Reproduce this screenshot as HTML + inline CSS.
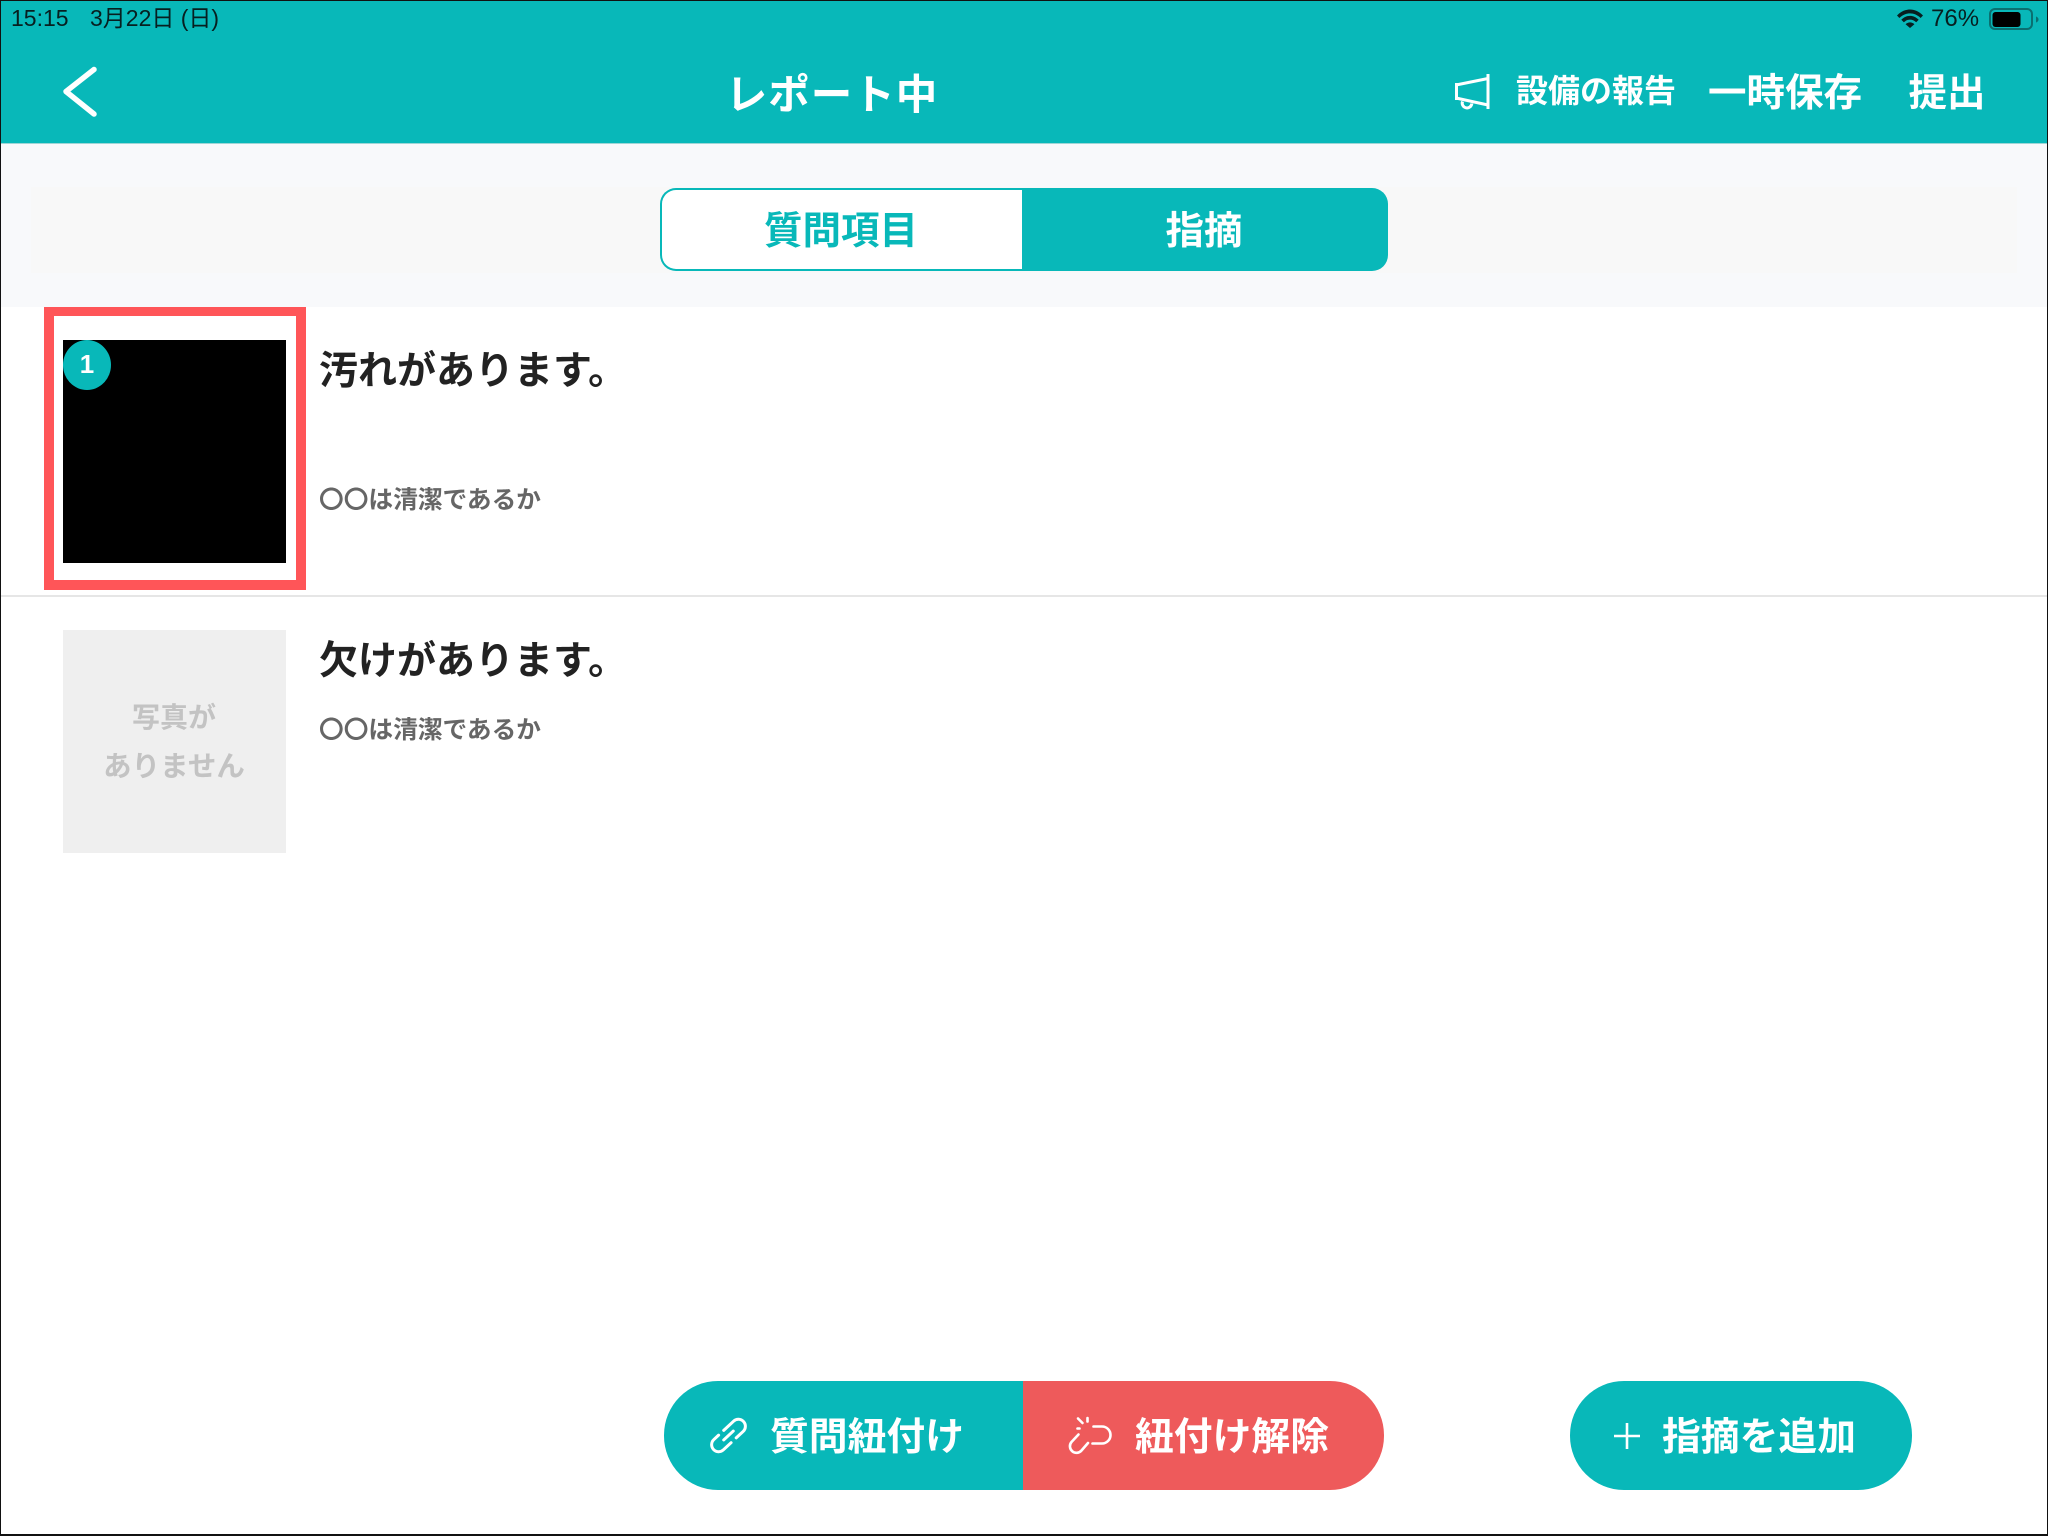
<!DOCTYPE html>
<html lang="ja">
<head>
<meta charset="utf-8">
<title>レポート中</title>
<style>
html,body{margin:0;padding:0;background:#fff}
body{width:2048px;height:1536px;position:relative;overflow:hidden;font-family:"Liberation Sans","Noto Sans CJK JP",sans-serif}
.a{position:absolute}
.t{position:absolute;white-space:nowrap;font-family:"Noto Sans CJK JP",sans-serif;font-weight:700;text-align:center}
</style>
</head>
<body>
<div class="a" style="left:0;top:0;width:2048px;height:144px;background:#08b8b9;border-bottom:1px solid #9fd6d6;box-sizing:border-box"></div>
<div class="a" style="left:0;top:144px;width:2048px;height:163px;background:#f8f9fb"></div>
<div class="a" style="left:31px;top:187px;width:1986px;height:86px;background:#f8f8f8"></div>

<div class="a" style="left:11px;top:5px;font:23px/26px 'Liberation Sans',sans-serif;color:#071f20;white-space:nowrap">15:15</div>
<div class="a" style="left:90px;top:5px;font:23px/26px 'Liberation Sans','Noto Sans CJK JP',sans-serif;color:#071f20;white-space:nowrap">3月22日 (日)</div>
<div class="a" style="left:1931px;top:6px;font:24px/26px 'Liberation Sans',sans-serif;color:#071f20;white-space:nowrap">76%</div>

<div class="t" style="left:632px;width:400px;top:61px;line-height:60px;font-size:41.5px;color:#fff;letter-spacing:1px">レポート中</div>
<div class="t" style="left:1516px;width:160px;top:65px;line-height:48px;font-size:32px;color:#fff">設備の報告</div>
<div class="t" style="left:1705px;width:160px;top:65px;line-height:50px;font-size:38.5px;color:#fff">一時保存</div>
<div class="t" style="left:1897px;width:100px;top:65px;line-height:50px;font-size:38.5px;color:#fff">提出</div>

<!-- segment -->
<div class="a" style="left:660px;top:188px;width:728px;height:83px;border-radius:16px;background:#08b8b9"></div>
<div class="a" style="left:662px;top:190px;width:360px;height:79px;border-radius:14px 0 0 14px;background:#fff"></div>
<div class="t" style="left:660px;width:362px;top:198px;line-height:60px;font-size:38.5px;color:#08b8b9">質問項目</div>
<div class="t" style="left:1021px;width:366px;top:198px;line-height:60px;font-size:38.5px;color:#fff">指摘</div>

<!-- row 1 -->
<div class="a" style="left:44px;top:307px;width:262px;height:283px;background:#ff5558"></div>
<div class="a" style="left:54px;top:316px;width:242px;height:264px;background:#fff"></div>
<div class="a" style="left:63px;top:340px;width:223px;height:223px;background:#000"></div>
<div class="a" style="left:63px;top:340px;width:48px;height:50px;border-radius:50%;background:#08b8b9"></div>
<div class="t" style="left:63px;width:48px;top:339px;line-height:50px;font-size:26px;color:#fff;font-family:'Liberation Sans',sans-serif;font-weight:700">1</div>
<div class="t" style="left:319px;top:343px;line-height:50px;font-size:39px;color:#222;text-align:left">汚れがあります。</div>
<div class="t" style="left:319px;top:480px;line-height:36px;font-size:24.7px;color:#666;text-align:left">〇〇は清潔であるか</div>
<div class="a" style="left:0;top:595px;width:2048px;height:2px;background:#e6e6e6"></div>

<!-- row 2 -->
<div class="a" style="left:63px;top:630px;width:223px;height:223px;background:#efefef"></div>
<div class="t" style="left:62px;width:224px;top:696px;line-height:40px;font-size:28px;color:#c3c3c3">写真が</div>
<div class="t" style="left:62px;width:224px;top:745px;line-height:40px;font-size:28.5px;color:#c3c3c3">ありません</div>
<div class="t" style="left:319px;top:633px;line-height:50px;font-size:39px;color:#222;text-align:left">欠けがあります。</div>
<div class="t" style="left:319px;top:710px;line-height:36px;font-size:24.7px;color:#666;text-align:left">〇〇は清潔であるか</div>

<!-- bottom buttons -->
<div class="a" style="left:664px;top:1381px;width:359px;height:109px;background:#08b8b9;border-radius:54px 0 0 54px"></div>
<div class="a" style="left:1023px;top:1381px;width:361px;height:109px;background:#ee5a5b;border-radius:0 54px 54px 0"></div>
<div class="a" style="left:1570px;top:1381px;width:342px;height:109px;background:#08b8b9;border-radius:54px"></div>
<div class="t" style="left:767px;width:200px;top:1404px;line-height:60px;font-size:38.8px;color:#fff">質問紐付け</div>
<div class="t" style="left:1132px;width:200px;top:1404px;line-height:60px;font-size:38.8px;color:#fff">紐付け解除</div>
<div class="t" style="left:1659px;width:200px;top:1404px;line-height:60px;font-size:38.8px;color:#fff">指摘を追加</div>

<!-- icons -->
<svg class="a" style="left:0;top:0" width="2048" height="1536" viewBox="0 0 2048 1536" fill="none">
  <!-- back -->
  <path d="M94 69.5L66 91.5L94 114" stroke="#fff" stroke-width="5.5" stroke-linecap="round" stroke-linejoin="round"/>
  <!-- megaphone -->
  <g stroke="#fff" stroke-width="3">
    <path d="M1456.5 83V100"/>
    <path d="M1488 74V109"/>
    <path d="M1456 85L1488 78.5"/>
    <path d="M1456 98L1488 105"/>
    <path d="M1462.5 101.5a4.8 4.8 0 1 0 9.3 2"/>
  </g>
  <!-- wifi -->
  <g fill="#071f20">
    <path d="M1897 15.5C1904.5 7.5 1915.5 7.5 1923 15.5L1920.6 18C1914.5 11.8 1905.5 11.8 1899.4 18Z"/>
    <path d="M1901.3 19.8C1906.5 14.6 1913.5 14.6 1918.7 19.8L1916.2 22.3C1912.4 18.8 1907.6 18.8 1903.8 22.3Z"/>
    <path d="M1905.6 24.2C1908.2 21.7 1911.8 21.7 1914.4 24.2L1910 28Z"/>
  </g>
  <!-- battery -->
  <rect x="1990" y="9" width="42" height="20" rx="5" stroke="#0a6f70" stroke-width="2"/>
  <rect x="1992.5" y="12" width="28" height="15" rx="3" fill="#000"/>
  <path d="M2036 16.5c2 .8 2.5 1.8 2.5 3s-.5 2.2-2.5 3z" fill="#0a6f70"/>
  <!-- link -->
  <g transform="translate(728.5 1435.5) rotate(-43)" stroke="#fff" stroke-width="3" stroke-linecap="round">
    <path d="M0 -7H13.5a7 7 0 0 1 0 14H4"/>
    <path d="M-3 7H-13.5a7 7 0 0 1 0 -14H-7"/>
    <path d="M-6.5 0H6.5"/>
  </g>
  <!-- unlink -->
  <g stroke="#fff" stroke-width="2.6" stroke-linecap="round" fill="none">
    <path d="M1093.5 1426.5H1102a8.5 8.5 0 0 1 0 17H1092.5"/>
    <path d="M1078.5 1434.5L1071.5 1442a6.5 6.5 0 0 0 10 8.5L1088 1443"/>
    <path d="M1078 1418.5L1082.5 1423"/>
    <path d="M1087.5 1418V1421.5"/>
    <path d="M1077.5 1428.5H1079.5"/>
  </g>
  <!-- plus -->
  <path d="M1614 1436H1640M1627 1423V1449" stroke="#fff" stroke-width="2.6"/>
</svg>

<!-- frame -->
<div class="a" style="left:0;top:0;width:2048px;height:1536px;border:1px solid #111;border-bottom-width:2px;box-sizing:border-box"></div>
</body>
</html>
